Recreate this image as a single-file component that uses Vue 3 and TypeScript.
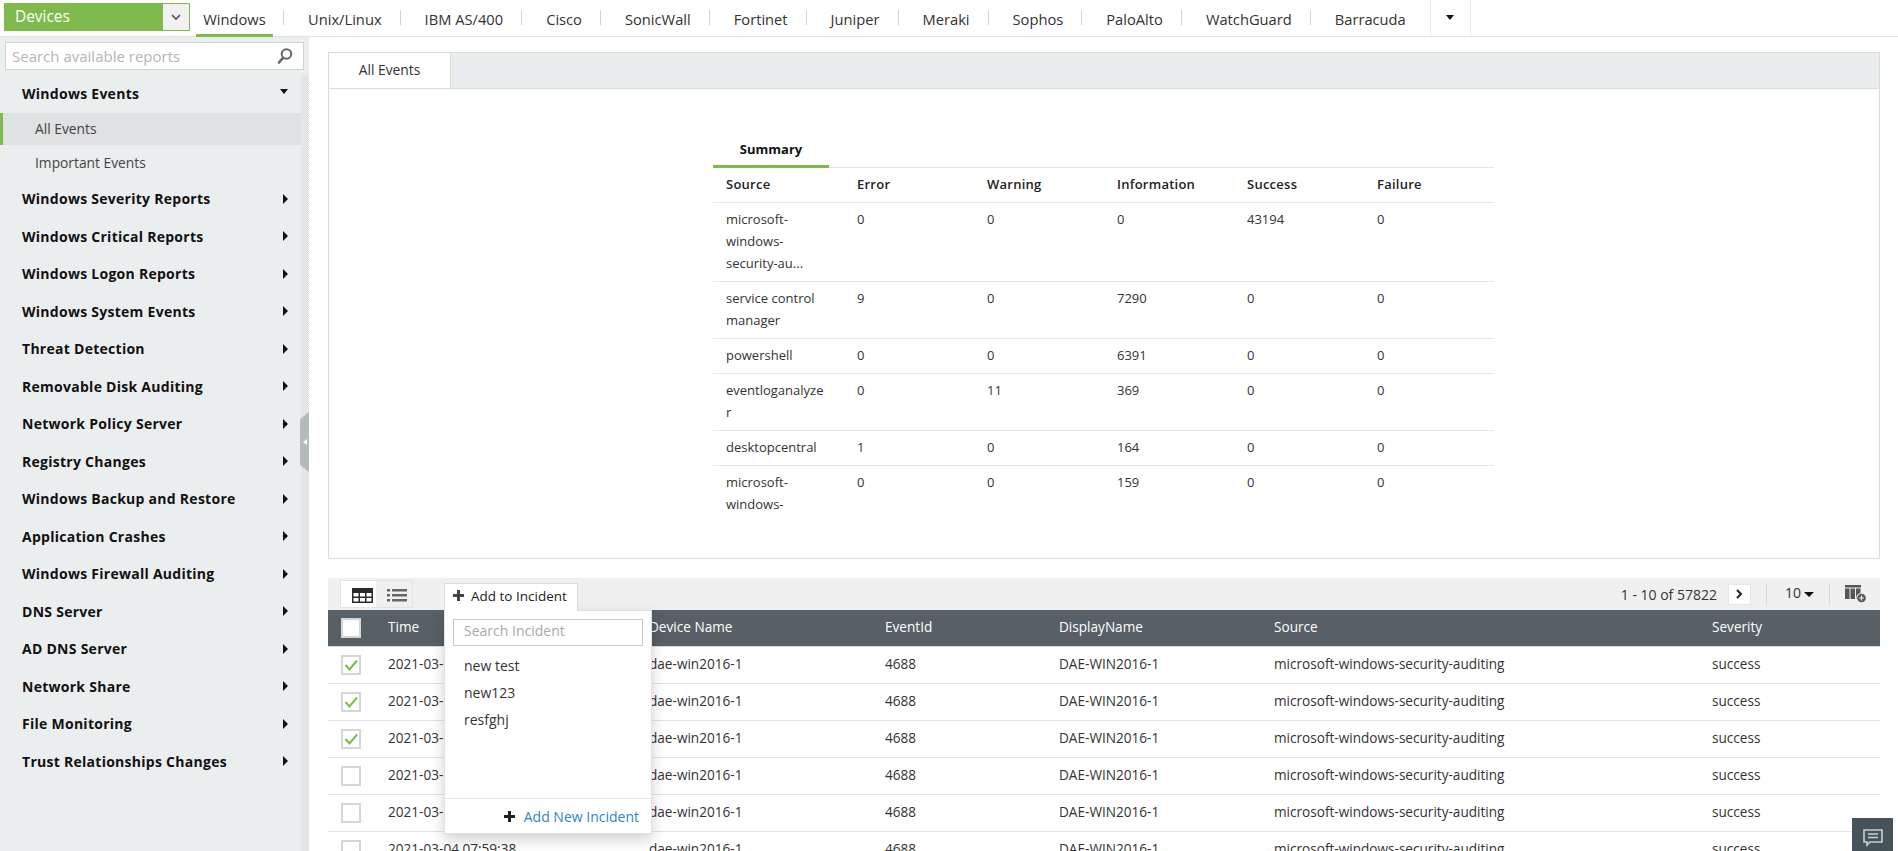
<script setup lang="ts">
const tabs: string[] = ['Windows','Unix/Linux','IBM AS/400','Cisco','SonicWall','Fortinet','Juniper','Meraki','Sophos','PaloAlto','WatchGuard','Barracuda']
const groups: string[] = ['Windows Severity Reports','Windows Critical Reports','Windows Logon Reports','Windows System Events','Threat Detection','Removable Disk Auditing','Network Policy Server','Registry Changes','Windows Backup and Restore','Application Crashes','Windows Firewall Auditing','DNS Server','AD DNS Server','Network Share','File Monitoring','Trust Relationships Changes']
const summaryHead: string[] = ['Source','Error','Warning','Information','Success','Failure']
const summaryRows: string[][] = [
  ['microsoft-windows-security-au...','0','0','0','43194','0'],
  ['service control manager','9','0','7290','0','0'],
  ['powershell','0','0','6391','0','0'],
  ['eventloganalyzer','0','11','369','0','0'],
  ['desktopcentral','1','0','164','0','0'],
  ['microsoft-windows-','0','0','159','0','0'],
]
const gridHead: string[] = ['Time','Device Name','EventId','DisplayName','Source','Severity']
const rows = Array.from({ length: 10 }, (_, i) => ({ id: i, checked: i < 3 }))
const incidents: string[] = ['new test','new123','resfghj']
</script>

<template>
  <div class="page">
    <header class="topbar">
      <div class="devices">
        <span class="devices-label">Devices</span>
        <span class="devices-drop">
          <svg width="10" height="7" viewBox="0 0 10 7"><path d="M1 1l4 4 4-4" fill="none" stroke="#555" stroke-width="1.6"/></svg>
        </span>
      </div>
      <nav class="tabs">
        <a v-for="(t, i) in tabs" :key="t" class="tab" :class="{ active: i === 0 }"><span>{{ t }}</span></a>
        <a class="tab-more"><i class="caret-down"></i></a>
      </nav>
    </header>

    <div class="body">
      <aside class="sidebar">
        <div class="search">
          <span class="search-ph">Search available reports</span>
          <svg width="18" height="18" viewBox="0 0 18 18"><circle cx="10.5" cy="7" r="4.8" fill="none" stroke="#666" stroke-width="2"/><path d="M7 10.8L3 15.5" stroke="#666" stroke-width="2.6" stroke-linecap="round"/></svg>
        </div>
        <div class="menu">
          <div class="group open"><span>Windows Events</span><i class="caret-down"></i></div>
          <div class="sub current">All Events</div>
          <div class="sub">Important Events</div>
          <div v-for="g in groups" :key="g" class="group"><span>{{ g }}</span><i class="caret-right"></i></div>
        </div>
        <div class="strip"></div>
        <div class="handle"><i></i></div>
      </aside>

      <main class="main">
        <section class="panel">
          <div class="panel-tabs"><div class="panel-tab">All Events</div></div>
          <div class="summary">
            <div class="summary-inner">
              <div class="summary-title"><span>Summary</span></div>
              <div class="sum-row sum-head"><div v-for="h in summaryHead" :key="h" class="sum-cell">{{ h }}</div></div>
              <div v-for="(r, i) in summaryRows" :key="i" class="sum-row">
                <div v-for="(c, j) in r" :key="j" class="sum-cell">{{ c }}</div>
              </div>
            </div>
          </div>
        </section>

        <section class="grid-wrap">
          <div class="toolbar">
            <div class="views">
              <span class="view on">
                <svg width="21" height="15" viewBox="0 0 21 15"><path fill="#2b2b2b" d="M0 0h21v15H0z"/><path fill="#fff" d="M1.500 5h5v3.500h-5zM8 5h5v3.500H8zM14.500 5h5v3.500h-5zM1.500 10h5v3.500h-5zM8 10h5v3.500H8zM14.500 10h5v3.500h-5z"/></svg>
              </span>
              <span class="view list">
                <svg width="20" height="13" viewBox="0 0 20 13"><path fill="#666" d="M0 0h3v2.500H0zM5 0h15v2.500H5zM0 5h3v2.500H0zM5 5h15v2.500H5zM0 10h3v2.500H0zM5 10h15v2.500H5z"/></svg>
              </span>
            </div>
            <div class="add-tab">
              <svg width="11" height="11" viewBox="0 0 11 11"><path fill="#444" d="M4 0h3v4h4v3H7v4H4V7H0V4h4z"/></svg>
              <span>Add to Incident</span>
            </div>
            <div class="pager">
              <span class="count">1 - 10 of 57822</span>
              <span class="next"><svg width="8" height="10" viewBox="0 0 8 10"><path d="M2 1l4 4-4 4" fill="none" stroke="#222" stroke-width="2"/></svg></span>
              <span class="vsep"></span>
              <span class="size">10<i class="caret-down dark"></i></span>
              <span class="vsep second"></span>
              <svg class="cols" width="22" height="18" viewBox="0 0 22 18"><path fill="#555" d="M0 0h16v2.500H0zM0 3.500h4.500V14H0zM5.500 3.500H10V14H5.500zM11 3.500h4.500V14H11z"/><circle cx="16.500" cy="13" r="5.300" fill="#f0f0f0"/><circle cx="16.500" cy="13" r="4.300" fill="#555"/><path fill="#f0f0f0" d="M15.900 10.500h1.200v1.900H19v1.200h-1.900v1.900h-1.200v-1.900H14v-1.200h1.900z"/></svg>
            </div>
          </div>

          <div class="grid-row grid-head">
            <div class="chk-cell"><span class="chk"></span></div>
            <div v-for="h in gridHead" :key="h">{{ h }}</div>
          </div>
          <div v-for="r in rows" :key="r.id" class="grid-row">
            <div class="chk-cell">
              <span class="chk">
                <svg v-if="r.checked" width="16" height="14" viewBox="0 0 16 14"><path d="M2.500 7l4 4.500L14 2.500" fill="none" stroke="#7fbb4c" stroke-width="2"/></svg>
              </span>
            </div>
            <div>2021-03-04 07:59:38</div>
            <div>dae-win2016-1</div>
            <div>4688</div>
            <div>DAE-WIN2016-1</div>
            <div>microsoft-windows-security-auditing</div>
            <div>success</div>
          </div>

          <div class="popover">
            <div class="pop-search">Search Incident</div>
            <ul class="pop-list"><li v-for="n in incidents" :key="n">{{ n }}</li></ul>
            <div class="pop-foot">
              <svg width="11" height="11" viewBox="0 0 11 11"><path fill="#222" d="M4 0h3v4h4v3H7v4H4V7H0V4h4z"/></svg>
              <a>Add New Incident</a>
            </div>
          </div>
        </section>
      </main>
    </div>

    <div class="chat">
      <svg width="20" height="18" viewBox="0 0 20 18"><path d="M1 1h18v12H7l-3 3v-3H1z" fill="none" stroke="#c8d0d2" stroke-width="1.600"/><path d="M5 5h10M5 8.500h10" stroke="#c8d0d2" stroke-width="1.500"/></svg>
    </div>
  </div>
</template>

<style>
html, body { margin: 0; padding: 0; background: #fff; }
</style>

<style scoped>
.page {
  position: relative;
  height: 851px;
  overflow: hidden;
  font-family: "Open Sans", "Liberation Sans", sans-serif;
  font-size: 13px;
  color: #222;
}
.topbar {
  display: flex;
  height: 37px;
  box-sizing: border-box;
  border-bottom: 1px solid #e3e5e5;
  padding: 3px 0 0 4px;
}
.devices {
  width: 186px;
  height: 28px;
  display: flex;
  box-sizing: border-box;
  background: #7fbb4c;
  border: 1px solid #7fbb4c;
}
.devices-label { flex: 1; color: #fff; font-size: 15.400px; line-height: 26px; padding-left: 10px; }
.devices-drop { width: 26px; background: #f1f1f1; display: flex; align-items: center; justify-content: center; }
.tabs { display: flex; margin-left: 6px; height: 33px; }
.tab {
  position: relative;
  display: flex;
  align-items: flex-start;
  padding: 0 19px 0 24px;
  font-size: 14.700px;
  line-height: 32px;
  color: #333;
  height: 34px;
}
.tab:first-child { padding: 0; width: 77px; justify-content: center; margin-right: 11px; }
.tab.active::before {
  content: "";
  position: absolute;
  left: 0; right: 0; bottom: 0;
  height: 3px;
  background: #7fbb4c;
}
.tab::after {
  content: "";
  position: absolute;
  right: 0; top: 7px;
  width: 1px; height: 15px;
  background: #d2d4d4;
}
.tab:first-child::after { right: -11px; }
.tab:nth-last-child(2)::after { display: none; }
.tab-more {
  width: 41px;
  height: 35px;
  margin: -3px 0 0 5px;
  border-left: 1px solid #e6e6e6;
  border-right: 1px solid #e6e6e6;
  display: flex;
  align-items: center;
  justify-content: center;
  box-sizing: border-box;
  padding-bottom: 1px;
}
.caret-down { display: inline-block; width: 0; height: 0; border-left: 4.500px solid transparent; border-right: 4.500px solid transparent; border-top: 5px solid #111; }
.caret-right { display: inline-block; width: 0; height: 0; border-top: 5px solid transparent; border-bottom: 5px solid transparent; border-left: 5px solid #111; }
.body { display: flex; height: 814px; }
.sidebar {
  position: relative;
  width: 309px;
  flex: none;
  background: #ebeeef;
  box-sizing: border-box;
  padding-top: 5px;
}
.search {
  margin: 0 5px;
  height: 28px;
  box-sizing: border-box;
  background: #fff;
  border: 1px solid #cfd2d2;
  display: flex;
  align-items: center;
  justify-content: space-between;
  padding: 0 9px 0 6px;
  color: #b5b5b5;
  font-size: 15px;
}
.menu { margin-top: 5px; padding-right: 8px; }
.group {
  display: flex;
  align-items: center;
  justify-content: space-between;
  height: 37.500px;
  box-sizing: border-box;
  padding: 0 13px 2px 22px;
  font-weight: 700;
  font-size: 14px;
  letter-spacing: .27px;
  color: #111;
}
.group.open { height: 38px; }
.group.open .caret-down { margin-top: -3px; }
.sub { height: 32px; line-height: 32px; padding-left: 35px; font-size: 13.800px; color: #444; }
.sub + .sub { height: 36px; line-height: 36px; }
.sub.current { background: #dfe1e2; box-shadow: inset 3px 0 0 #7fbb4c; }
.strip {
  position: absolute;
  right: 0;
  top: 38px;
  bottom: 0;
  width: 8px;
  background:
    linear-gradient(to bottom, transparent 337px, #e2e4e5 337px),
    repeating-conic-gradient(#d9dcdd 0 25%, #eef0f1 0 50%) 0 0 / 2px 2px;
}
.handle {
  position: absolute;
  right: 0;
  top: 375px;
  width: 9px;
  height: 60px;
  background: #b4bbbb;
  clip-path: polygon(100% 0, 100% 100%, 0 88%, 0 12%);
  display: flex;
  align-items: center;
  justify-content: center;
}
.handle i { width: 0; height: 0; border-top: 3px solid transparent; border-bottom: 3px solid transparent; border-right: 4px solid #fff; }
.main { flex: 1; min-width: 0; padding: 15px 18px 0 19px; }
.panel { height: 507px; box-sizing: border-box; border: 1px solid #d9dcdc; }
.panel-tabs { height: 36px; box-sizing: border-box; background: #eaeded; border-bottom: 1px solid #d9dcdc; }
.panel-tab { width: 122px; height: 35px; background: #fff; text-align: center; line-height: 34px; border-right: 1px solid #d9dcdc; box-sizing: border-box; color: #333; font-size: 13.800px; }
.summary { display: flex; justify-content: center; height: 430px; overflow: hidden; }
.summary-inner { width: 781px; padding-top: 42px; margin-left: -1px; }
.summary-title { border-bottom: 1px solid #e4e6e6; height: 37px; box-sizing: border-box; }
.summary-title span { display: block; width: 116px; height: 37px; box-sizing: border-box; text-align: center; font-weight: 700; line-height: 36px; color: #111; border-bottom: 3px solid #7fbb4c; }
.sum-row { display: grid; grid-template-columns: 131px repeat(5, 130px); border-bottom: 1px solid #e8e9e9; }
.sum-cell { padding: 5px 13px 7px; line-height: 22px; overflow-wrap: anywhere; color: #333; }
.sum-head .sum-cell { font-weight: 600; color: #222; letter-spacing: .25px; }
.sum-row:not(.sum-head) .sum-cell:first-child { padding-right: 16px; }
.grid-wrap { position: relative; margin-top: 19px; }
.toolbar { height: 32px; background: #f0f0f0; display: flex; position: relative; padding-left: 12px; }
.views { display: flex; height: 28px; margin-top: 2px; border: 1px solid #e3e3e3; box-sizing: border-box; width: 73px; }
.view { flex: 1; display: flex; align-items: center; justify-content: center; padding-top: 2px; }
.view.on { background: #fff; flex: 0 0 35px; justify-content: flex-end; padding-right: 3px; box-sizing: border-box; }
.view.list { justify-content: flex-start; padding-left: 11px; }
.add-tab {
  position: absolute;
  left: 116px;
  top: 5px;
  width: 134px;
  height: 28px;
  box-sizing: border-box;
  background: #fff;
  border: 1px solid #d9dcdc;
  border-bottom: 0;
  z-index: 3;
  display: flex;
  align-items: center;
  gap: 7px;
  padding: 0 0 4px 8px;
  color: #222;
  font-size: 13.500px;
}
.pager { margin-left: auto; display: flex; align-items: center; padding-right: 13px; color: #333; font-size: 14px; }
.count { margin-right: 11px; }
.next { width: 23px; height: 21px; background: #fff; border: 1px solid #e6e6e6; box-sizing: border-box; display: flex; align-items: center; justify-content: center; }
.vsep { width: 1px; height: 21px; background: #d8d8d8; margin: 0 18px 0 15px; }
.vsep.second { margin: 0 15px; }
.size { display: flex; align-items: center; gap: 3px; margin-top: -3px; }
.dark { margin-top: 3px; border-left-width: 5.500px; border-right-width: 5.500px; border-top-width: 5.500px; }
.grid-row {
  display: grid;
  grid-template-columns: 60px 261px 236px 174px 215px 438px 1fr;
  height: 37px;
  box-sizing: border-box;
  align-items: center;
  border-bottom: 1px solid #e3e5e5;
  color: #333;
  font-size: 13.600px;
  padding-bottom: 3px;
}
.grid-head { background: #566066; color: #fff; border-bottom: 1px solid #d5d8d8; }
.chk-cell { padding-left: 13px; display: flex; margin-top: 3px; }
.chk { width: 20px; height: 20px; box-sizing: border-box; background: #fff; border: 2px solid #d5d7d7; display: flex; align-items: center; justify-content: center; }
.popover {
  position: absolute;
  left: 116px;
  top: 32px;
  width: 208px;
  height: 224px;
  box-sizing: border-box;
  background: #fff;
  border: 1px solid #e0e2e2;
  box-shadow: 0 6px 14px rgba(0, 0, 0, .18);
  z-index: 2;
  padding: 8px 8px 0;
  display: flex;
  flex-direction: column;
  font-size: 14px;
}
.pop-search { height: 27px; box-sizing: border-box; border: 1px solid #c9cccc; line-height: 22px; padding-left: 10px; color: #aaa; width: 190px; }
.pop-list { list-style: none; margin: 6px 0 0; padding: 0 0 0 11px; flex: 1; }
.pop-list li { height: 27px; line-height: 27px; color: #333; }
.pop-foot {
  margin: 0 -8px;
  height: 34px;
  border-top: 1px solid #e3e5e5;
  display: flex;
  align-items: center;
  justify-content: flex-end;
  gap: 9px;
  padding-right: 12px;
}
.pop-foot a { color: #2f86c5; }
.chat {
  position: absolute;
  left: 1852px;
  top: 818px;
  width: 41px;
  height: 33px;
  background: #47535a;
  display: flex;
  align-items: center;
  justify-content: center;
  padding-top: 6px;
  box-sizing: border-box;
}
</style>
